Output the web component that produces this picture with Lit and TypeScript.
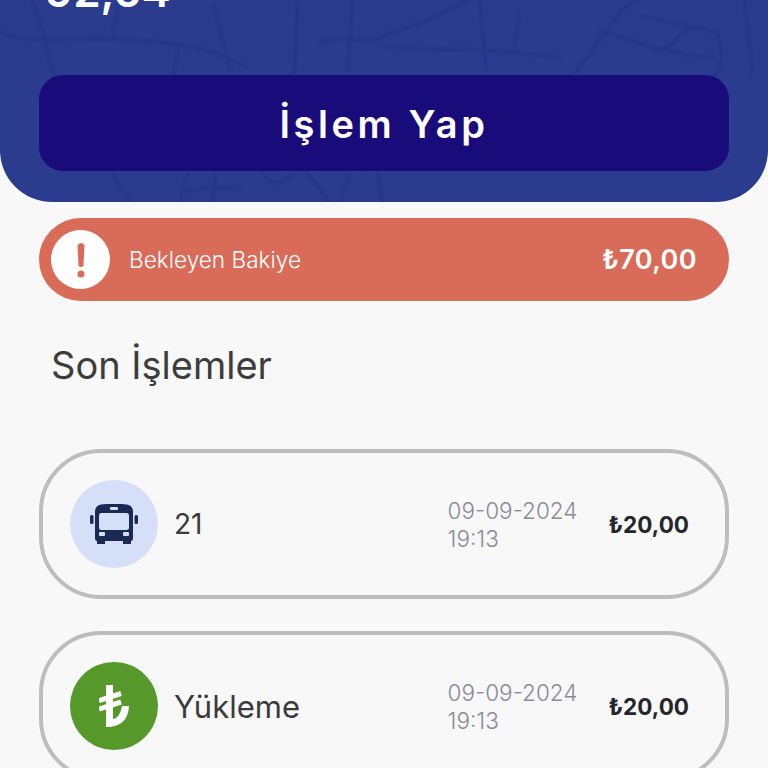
import { LitElement, html, css, svg } from 'lit';
import { customElement } from 'lit/decorators.js';

// faint street map behind the hero
const roads = svg`
  <path d="M0 33 C40 46 70 36 130 40 S200 45 245 66 M33 0 L55 78 M214 5 L230 72 M298 0 L294 78 M352 0 L348 72 M120 0 L112 38 M180 42 L172 78"/>
  <path d="M320 42 C350 34 370 46 384 36 C420 24 440 14 470 0 M384 47 C450 50 510 50 560 58 M574 74 L624 7 L640 0 M640 16 C680 24 700 28 716 32 C724 44 722 60 716 76 M480 0 L486 72 M520 12 L514 48 M694 26 L660 52 M745 0 L752 76 M600 30 C650 48 680 56 716 58"/>
  <path d="M112 172 L130 202 M188 172 L180 202 M216 172 L212 202 M262 172 C270 185 280 188 296 172 M306 172 L330 202 M350 172 L340 202 M378 172 L382 202 M186 190 L240 188"/>
`;

interface Tx {
  name: string;
  kind: 'bus' | 'load';
}

@customElement('app-root')
export class AppRoot extends LitElement {
  static styles = css`
    :host {
      display: block;
      height: 768px;
      overflow: hidden;
      background: #f8f8f8;
      font-family: Inter, "Open Sans", sans-serif;
      color: #333;
    }
    .hero {
      position: relative;
      height: 202px;
      box-sizing: border-box;
      background: #2b3b8e;
      border-radius: 0 0 52px 52px;
      padding: 75px 39px 0;
      overflow: hidden;
    }
    .map {
      position: absolute;
      inset: 0;
      width: 100%;
      height: 100%;
      fill: none;
      stroke: #263584;
      stroke-width: 3;
      filter: blur(0.8px);
    }
    .amount {
      position: absolute;
      left: 45px;
      top: -31px;
      font-size: 44px;
      line-height: 44px;
      font-weight: 600;
      color: #fff;
    }
    .action {
      position: relative;
      height: 96px;
      box-sizing: border-box;
      padding-top: 2px;
      border-radius: 24px;
      background: #1a0b7a;
      color: #fff;
      display: flex;
      align-items: center;
      justify-content: center;
      font-size: 38px;
      font-weight: 600;
      letter-spacing: 3.6px;
    }
    .content {
      padding: 16px 39px 0;
    }
    .pending {
      height: 83px;
      border-radius: 42px;
      background: #d96b59;
      color: #fff;
      display: flex;
      align-items: center;
      padding: 0 32px 0 12px;
    }
    .alert {
      width: 59px;
      height: 59px;
      border-radius: 50%;
      background: #fff;
      display: flex;
      align-items: center;
      justify-content: center;
    }
    .pending-label {
      margin-left: 19px;
      flex: 1;
      font-size: 22.6px;
      font-weight: 300;
    }
    .pending-value {
      font-size: 27px;
      font-weight: 600;
      letter-spacing: 0.4px;
    }
    h2 {
      margin: 40px 0 59px 12px;
      height: 49px;
      line-height: 49px;
      font-size: 38px;
      font-weight: 400;
      color: #3c3c3c;
    }
    .list {
      display: flex;
      flex-direction: column;
      gap: 32px;
    }
    .row {
      height: 150px;
      box-sizing: border-box;
      border: 4px solid #bdbdbd;
      border-radius: 62px;
      display: flex;
      align-items: center;
      padding: 0 36px 0 27px;
    }
    .icon {
      width: 88px;
      height: 88px;
      border-radius: 50%;
      display: flex;
      align-items: center;
      justify-content: center;
      flex: none;
    }
    .icon.bus { background: #d5e0f8; }
    .icon.load { background: #56982a; }
    .name {
      margin-left: 16px;
      flex: 1;
      font-size: 31px;
      color: #3a3a3a;
    }
    .name.short {
      font-size: 28px;
    }
    .when {
      width: 161px;
      padding-top: 2px;
      font-size: 22.5px;
      line-height: 28px;
      font-weight: 300;
      color: #8a8b98;
    }
    .price {
      font-size: 22.5px;
      font-weight: 700;
      color: #25262b;
    }
  `;

  private txs: Tx[] = [
    { name: '21', kind: 'bus' },
    { name: 'Yükleme', kind: 'load' },
  ];

  private busIcon() {
    return html`<svg width="48" height="40" viewBox="0 0 48 40">
      <path fill="#1b2a52" d="M11 0.5 Q24 -1 37 0.5 Q43 1.5 43 8 V34 Q43 37 41 37 V40 H33 V37 H15 V40 H7 V37 Q5 37 5 34 V8 Q5 1.5 11 0.5Z"/>
      <rect x="9" y="9" width="30" height="17" rx="2.5" fill="#d5e0f8"/>
      <rect x="20" y="3" width="8" height="3" rx="1" fill="#d5e0f8"/>
      <rect x="9" y="28" width="6" height="4" rx="1" fill="#d5e0f8"/>
      <rect x="33" y="28" width="6" height="4" rx="1" fill="#d5e0f8"/>
      <rect x="0" y="11" width="3.5" height="9" rx="1.5" fill="#1b2a52"/>
      <rect x="44.5" y="11" width="3.5" height="9" rx="1.5" fill="#1b2a52"/>
    </svg>`;
  }

  private liraIcon() {
    return html`<svg width="30" height="42" viewBox="0 0 30 42">
      <path fill="#fff" d="M7 0 H14 V34 Q21 33 23 21 H30 Q29 42 7 42 Z"/>
      <path fill="none" stroke="#fff" stroke-width="5" d="M0 15.5 L22 8.5 M0 24 L22 17"/>
    </svg>`;
  }

  render() {
    return html`
      <div class="hero">
        <svg class="map" viewBox="0 0 768 202" preserveAspectRatio="none">${roads}</svg>
        <div class="amount">92,64</div>
        <div class="action">İşlem Yap</div>
      </div>
      <div class="content">
        <div class="pending">
          <div class="alert">
            <svg width="8" height="36" viewBox="0 0 8 36">
              <path fill="#d96b59" d="M0.5 3 Q4 -1 7.5 3 L6.5 24 Q4 26 1.5 24Z"/>
              <circle cx="4" cy="32" r="3.5" fill="#d96b59"/>
            </svg>
          </div>
          <div class="pending-label">Bekleyen Bakiye</div>
          <div class="pending-value">₺70,00</div>
        </div>
        <h2>Son İşlemler</h2>
        <div class="list">
          ${this.txs.map(
            (t) => html`
              <div class="row">
                <div class="icon ${t.kind}">
                  ${t.kind === 'bus' ? this.busIcon() : this.liraIcon()}
                </div>
                <div class="name ${t.kind === 'bus' ? 'short' : ''}">${t.name}</div>
                <div class="when">09-09-2024<br />19:13</div>
                <div class="price">₺20,00</div>
              </div>
            `
          )}
        </div>
      </div>
    `;
  }
}
